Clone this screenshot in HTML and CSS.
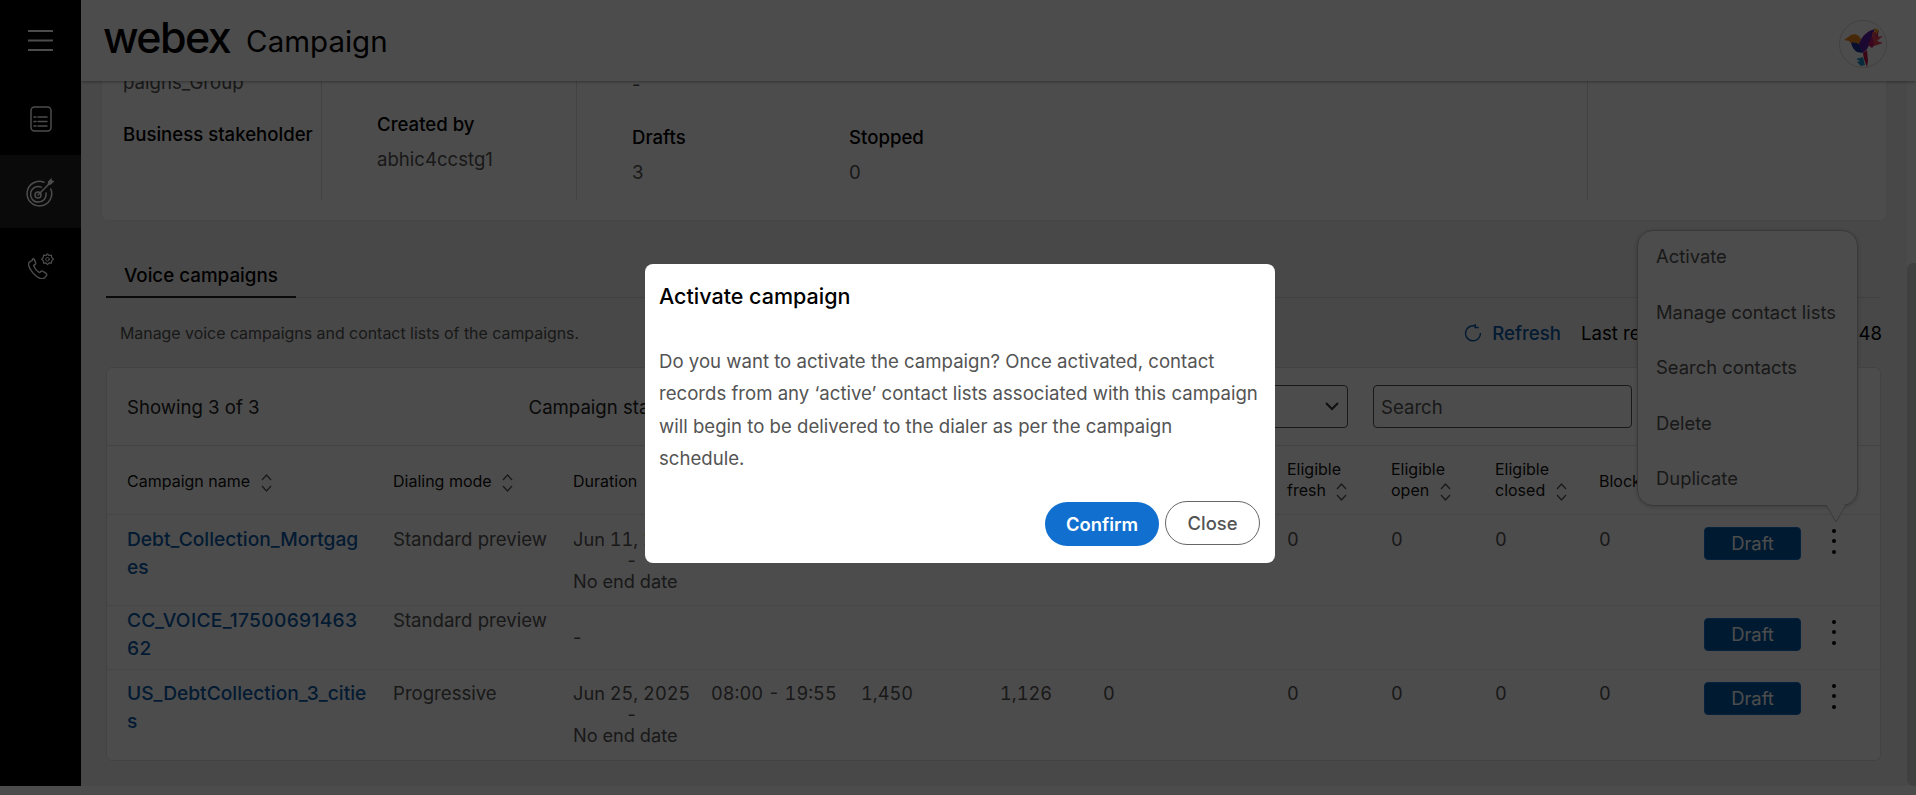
FILE: index.html
```html
<!DOCTYPE html>
<html lang="en">
<head>
<meta charset="utf-8">
<title>Webex Campaign</title>
<link rel="stylesheet" href="styles.css">
</head>
<body>
<div class="app">
  <nav class="sidebar">
    <div class="nav-item nav-menu">
      <svg width="25" height="22" viewBox="0 0 25 22"><path d="M0 2h25M0 11.500h25M0 21h25" class="ic" stroke-width="2"/></svg>
    </div>
    <div class="nav-item nav-list">
      <svg width="22" height="26" viewBox="0 0 22 26"><rect x="1" y="1" width="20" height="24" rx="3.500" class="ic" stroke-width="1.500"/><path d="M8 11h9M8 15.500h9M8 20h9M4 11h2M4 15.500h2M4 20h2" class="ic" stroke-width="1.500"/></svg>
    </div>
    <div class="nav-item nav-active">
      <svg width="32" height="32" viewBox="0 0 32 32"><path d="M20 5.200A12.300 12.300 0 1 0 26.800 12" class="ic" stroke-width="1.500"/><path d="M17.300 10.100A7.800 7.800 0 1 0 22 16" class="ic" stroke-width="1.500"/><circle cx="14" cy="18" r="3" class="ic" stroke-width="1.500"/><path d="M14 18 25 7" class="ic" stroke-width="1.500"/><path d="M23.500 8.500l.5-4L27.500 1l.5 2.500 2.500.5L27 7.500z" class="icf"/></svg>
    </div>
    <div class="nav-item nav-phone">
      <svg width="26" height="26" viewBox="0 0 26 26"><g transform="translate(-.5 -1) scale(1.100)"><path d="M4.500 7.500 2 9c-1 .7-1.200 1.800-1 3 .8 4 5.500 10 10.500 12 1.500.6 3 .5 4-.5l1.700-2c.5-.7.300-1.500-.3-2l-3-2c-.6-.4-1.300-.3-1.800.2l-1 1c-2.200-1.100-4.500-4-5.500-6.500l1.200-.8c.6-.4.800-1.100.5-1.800l-1-2.800c-.3-.6-1.100-.8-1.800-.3z" class="ic" stroke-width="1.300"/></g><path d="M19.500 .8l1.600 1.700 2.300-.3.300 2.300 1.700 1.700-1.700 1.700-.3 2.300-2.300-.3-1.600 1.700-1.600-1.700-2.300.3-.3-2.300-1.700-1.700 1.700-1.700.3-2.300 2.300.3z" class="ic" stroke-width="1.200"/><circle cx="19.500" cy="6.300" r="1.800" class="ic" stroke-width="1"/></svg>
    </div>
  </nav>
  <div class="main">
    <header class="topbar">
      <span class="logo">webex</span>
      <span class="product">Campaign</span>
      <span class="avatar">
        <svg width="48" height="48" viewBox="0 0 48 48">
          <circle cx="24" cy="24" r="23.500" fill="#fff" stroke="#d8d8d8"/>
          <path d="M5 20 12 15c4-2 8 0 10 4l-1 6c-5 1-9-1-11-4z" fill="#ef8a1f"/>
          <path d="M12 23c3-1 7 0 9 2l3 8-6-1c-3-2-5-5-6-9z" fill="#1d2f9a"/>
          <path d="M20 24c3-8 8-13 16-15-3 6-4 13-8 20l-4 4z" fill="#5a1fa8"/>
          <path d="M29 25c2-6 5-11 10-13 1 5-2 12-6 16z" fill="#c2186b"/>
          <path d="M33 12l7-1-3 6 7-1-6 5 6 2-9 3z" fill="#e8455a"/>
          <path d="M35 8l5 2-3 4z" fill="#f0a020"/>
          <path d="M24 33l4-3 1 11-1 6-3-8z" fill="#c0134f"/>
          <path d="M24 37l2 8-4 1-4-4 3-1-4-2z" fill="#1a8fc4"/>
        </svg>
      </span>
    </header>
    <div class="body-row">
      <div class="scroller">
        <section class="summary">
          <div class="sum-col sum-a">
            <div class="sum-value sum-clip">paigns_Group</div>
            <div class="sum-label sum-stake">Business stakeholder</div>
          </div>
          <div class="sum-col sum-b">
            <div class="sum-label">Created by</div>
            <div class="sum-value sum-gap">abhic4ccstg1</div>
          </div>
          <div class="sum-col sum-c">
            <div class="sum-value sum-dash">-</div>
            <div class="sum-stats">
              <div class="stat">
                <div class="sum-label">Drafts</div>
                <div class="sum-value sum-gap">3</div>
              </div>
              <div class="stat">
                <div class="sum-label">Stopped</div>
                <div class="sum-value sum-gap">0</div>
              </div>
            </div>
          </div>
          <div class="sum-col sum-d"></div>
        </section>
        <div class="tabs"><span class="tab">Voice campaigns</span></div>
        <div class="desc-row">
          <span class="desc">Manage voice campaigns and contact lists of the campaigns.</span>
          <span class="refresh">
            <svg width="18" height="18" viewBox="0 0 18 18"><path d="M11.500 2.200A7.500 7.500 0 1 0 16.500 9" class="rf"/><path d="M11.200 0v3.600h3.500" class="rf"/></svg>
            Refresh
          </span>
          <span class="last">Last refreshed at Jun 25, 16:24:48</span>
        </div>
        <section class="panel">
          <div class="panel-head">
            <span class="showing">Showing 3 of 3</span>
            <span class="status-label">Campaign status</span>
            <span class="select">
              <svg width="14" height="9" viewBox="0 0 14 9"><path d="M1 1l6 6 6-6" class="chev"/></svg>
            </span>
            <span class="search">Search</span>
          </div>
          <table class="grid">
            <colgroup>
              <col class="c-name"><col class="c-mode"><col class="c-dur"><col class="c-time"><col class="c-num1"><col class="c-num2"><col class="c-num3"><col class="c-num4"><col class="c-num5"><col class="c-num5"><col class="c-num6"><col class="c-stat"><col class="c-act">
            </colgroup>
            <thead>
              <tr>
                <th class="single"><span class="th-in">Campaign name <svg class="sort" width="11" height="18" viewBox="0 0 11 18"><path d="M1 6l4.500-5L10 6M1 12l4.500 5L10 12"/></svg></span></th>
                <th class="single"><span class="th-in">Dialing mode <svg class="sort" width="11" height="18" viewBox="0 0 11 18"><path d="M1 6l4.500-5L10 6M1 12l4.500 5L10 12"/></svg></span></th>
                <th class="single">Duration</th>
                <th>Time</th>
                <th>Total</th>
                <th>Dialed</th>
                <th>Failed</th>
                <th>Eligible<br>fresh <svg class="sort" width="11" height="18" viewBox="0 0 11 18"><path d="M1 6l4.500-5L10 6M1 12l4.500 5L10 12"/></svg></th>
                <th>Eligible<br>open <svg class="sort" width="11" height="18" viewBox="0 0 11 18"><path d="M1 6l4.500-5L10 6M1 12l4.500 5L10 12"/></svg></th>
                <th>Eligible<br>closed <svg class="sort" width="11" height="18" viewBox="0 0 11 18"><path d="M1 6l4.500-5L10 6M1 12l4.500 5L10 12"/></svg></th>
                <th class="single">Blocked</th>
                <th></th>
                <th></th>
              </tr>
            </thead>
            <tbody>
              <tr class="row-a">
                <td><a class="link">Debt_Collection_Mortgages</a></td>
                <td>Standard preview</td>
                <td class="num"><div class="dur">Jun 11, 2025<span class="dur-dash">-</span>No end date</div></td>
                <td class="num">08:00 - 19:55</td>
                <td class="num">1,450</td>
                <td class="num">1,126</td>
                <td class="num">0</td>
                <td class="num">0</td>
                <td class="num">0</td>
                <td class="num">0</td>
                <td class="num">0</td>
                <td class="act"><span class="draft">Draft</span></td>
                <td class="act"><span class="kebab"><i></i><i></i><i></i></span></td>
              </tr>
              <tr class="row-b">
                <td><a class="link link-digits">CC_VOICE_17500691463<br>62</a></td>
                <td>Standard preview</td>
                <td><div class="dash">-</div></td>
                <td></td>
                <td></td>
                <td></td>
                <td></td>
                <td></td>
                <td></td>
                <td></td>
                <td></td>
                <td class="act"><span class="draft">Draft</span></td>
                <td class="act"><span class="kebab"><i></i><i></i><i></i></span></td>
              </tr>
              <tr class="row-c">
                <td><a class="link">US_DebtCollection_3_cities</a></td>
                <td>Progressive</td>
                <td class="num"><div class="dur">Jun 25, 2025<span class="dur-dash">-</span>No end date</div></td>
                <td class="num">08:00 - 19:55</td>
                <td class="num">1,450</td>
                <td class="num">1,126</td>
                <td class="num">0</td>
                <td class="num">0</td>
                <td class="num">0</td>
                <td class="num">0</td>
                <td class="num">0</td>
                <td class="act"><span class="draft">Draft</span></td>
                <td class="act"><span class="kebab"><i></i><i></i><i></i></span></td>
              </tr>
            </tbody>
          </table>
        </section>
      </div>
      <div class="vscroll"><div class="vthumb"></div></div>
    </div>
  </div>
</div>
<div class="hscroll"></div>

<div class="menu">
  <div class="menu-item">Activate</div>
  <div class="menu-item">Manage contact lists</div>
  <div class="menu-item">Search contacts</div>
  <div class="menu-item">Delete</div>
  <div class="menu-item">Duplicate</div>
  <svg class="menu-tip" width="22" height="18" viewBox="0 0 22 18"><path d="M1 0 11 17 21 0" class="tip-shape"/></svg>
</div>

<div class="overlay"></div>

<div class="dialog">
  <h2 class="dlg-title">Activate campaign</h2>
  <p class="dlg-text">Do you want to activate the campaign? Once activated, contact records from any ‘active’ contact lists associated with this campaign will begin to be delivered to the dialer as per the campaign schedule.</p>
  <div class="dlg-actions">
    <button class="btn btn-primary">Confirm</button>
    <button class="btn btn-ghost">Close</button>
  </div>
</div>
</body>
</html>
```
FILE: styles.css
```css
* { box-sizing: border-box; }
html, body { margin: 0; height: 795px; overflow: hidden; }
body { font-family: Inter, "Liberation Sans", sans-serif; font-size: 18.6px; color: #545454; background: #fff; position: relative; }

.app { display: flex; height: 786px; }
.hscroll { height: 9px; background: #fff; }

/* sidebar */
.sidebar { width: 81px; flex: none; background: #000; display: flex; flex-direction: column; align-items: stretch; }
.nav-item { display: flex; justify-content: center; align-items: center; }
.nav-menu { height: 80px; }
.nav-list { height: 75px; padding-top: 2px; }
.nav-active { height: 73px; background: #232323; padding-right: 2px; padding-top: 3px; }
.nav-phone { height: 70px; padding-top: 6px; }
.ic { fill: none; stroke: #fff; stroke-linecap: round; stroke-linejoin: round; }
.icf { fill: #fff; }

/* main */
.main { flex: 1; display: flex; flex-direction: column; min-width: 0; background: #f1f1f1; }
.topbar { height: 81px; flex: none; background: #fff; display: flex; align-items: center; padding-left: 22px; padding-right: 29px; box-shadow: 0 1px 3px rgba(0,0,0,.35); position: relative; z-index: 2; }
.logo { font-size: 43px; font-weight: 500; letter-spacing: -1.600px; color: #000; line-height: 1; margin-top: -7px; }
.product { font-size: 29.500px; color: #000; margin-left: 16px; line-height: 1; margin-top: 3px; }
.avatar { margin-left: auto; display: block; height: 48px; margin-top: 7px; }

.body-row { flex: 1; display: flex; min-height: 0; }
.scroller { flex: 1; min-width: 0; overflow: hidden; padding: 0 21px; }
.vscroll { width: 9px; flex: none; background: #fbfbfb; display: flex; flex-direction: column; justify-content: flex-end; }
.vthumb { height: 523px; background: #d8d8d8; border-radius: 6px 0 0 6px; }

/* summary card */
.summary { display: flex; height: 190px; margin-top: -51px; background: #fff; border-radius: 6px; box-shadow: 0 0 2px rgba(0,0,0,.08); padding-top: 20px; }
.sum-col { height: 150px; border-right: 1px solid #dcdcdc; }
.sum-a { width: 220px; padding-left: 21px; }
.sum-b { width: 255px; padding-left: 55px; padding-top: 64px; }
.sum-c { width: 1011px; padding-left: 55px; }
.sum-d { flex: 1; border-right: 0; }
.sum-label { color: #000; font-weight: 500; font-size: 18.600px; line-height: 20px; white-space: nowrap; }
.sum-value { font-size: 18.600px; line-height: 20px; white-space: nowrap; }
.sum-clip { margin-top: 22px; }
.sum-stake { margin-top: 32px; }
.sum-gap { margin-top: 15px; }
.sum-dash { margin-top: 24px; }
.sum-stats { display: flex; margin-top: 33px; }
.stat { width: 217px; }

/* tabs */
.tabs { margin-top: 36px; margin-left: 4px; margin-right: 6px; height: 42px; border-bottom: 1px solid #d8d8d8; }
.tab { display: block; width: 190px; height: 42px; padding: 10px 0 0 18px; font-size: 18.800px; font-weight: 500; line-height: 20px; color: #000; border-bottom: 2px solid #222; }

/* description row */
.desc-row { display: flex; align-items: center; height: 34px; margin-top: 18px; margin-left: 18px; margin-right: 4px; }
.desc { font-size: 15.900px; color: #545454; white-space: nowrap; }
.refresh { margin-left: auto; display: flex; align-items: center; gap: 10px; color: #0a5aa8; font-weight: 500; font-size: 18.600px; }
.rf { fill: none; stroke: #0a5aa8; stroke-width: 1.500; }
.last { margin-left: 17px; width: 304px; color: #000; font-size: 18.600px; white-space: nowrap; text-align: right; overflow: hidden; }

/* table panel */
.panel { margin-top: 17px; margin-left: 4px; margin-right: 5px; height: 394px; background: #fff; border: 1px solid #dedede; border-radius: 6px; }
.panel-head { height: 78px; border-bottom: 1px solid #e2e2e2; display: flex; align-items: center; padding-left: 20px; position: relative; }
.showing { color: #222; font-size: 18.600px; }
.status-label { color: #222; margin-left: 269px; font-size: 18.600px; }
.select { position: absolute; left: 1000px; top: 17px; width: 241px; height: 43px; border: 1px solid #555; border-radius: 4px; display: flex; justify-content: flex-end; align-items: center; padding-right: 8px; }
.chev { fill: none; stroke: #333; stroke-width: 2; }
.search { position: absolute; left: 1266px; top: 17px; width: 259px; height: 43px; border: 1px solid #555; border-radius: 4px; display: flex; align-items: center; padding-left: 7px; color: #545454; font-size: 18.600px; }

.grid { width: 1774px; table-layout: fixed; border-collapse: collapse; }
.c-name { width: 266px; } .c-mode { width: 180px; } .c-dur { width: 138px; } .c-time { width: 150px; }
.c-num1 { width: 139px; } .c-num2 { width: 103px; } .c-num3 { width: 184px; } .c-num4 { width: 104px; }
.c-num5 { width: 104px; } .c-num6 { width: 105px; } .c-stat { width: 130px; } .c-act { width: 67px; }
.grid th { height: 68px; padding: 0 0 0 20px; text-align: left; font-weight: 400; font-size: 16px; line-height: 21px; color: #111; border-bottom: 1px solid #ececec; white-space: nowrap; overflow: hidden; }
.grid th.single { padding-top: 4px; }
.th-in { white-space: nowrap; }
.sort { vertical-align: -5px; margin-left: 6px; }
.sort path { fill: none; stroke: #555; stroke-width: 1.300; }
.grid td { vertical-align: top; padding: 10px 0 0 20px; line-height: 28px; font-size: 18.600px; border-bottom: 1px solid #ececec; white-space: nowrap; }
.grid td.num { font-size: 18.200px; font-variant-numeric: tabular-nums; }
.grid tr:last-child td { border-bottom: 0; }
.row-a td { height: 91px; padding-top: 10px; }
.row-b td { height: 64px; padding-top: 0; }
.row-c td { height: 92px; padding-top: 9px; }
.link { color: #0a5aa8; font-weight: 500; font-size: 19.200px; word-break: break-all; white-space: normal; display: block; padding-right: 4px; }
.link-digits { letter-spacing: .3px; }
.dur { line-height: 21px; display: inline-block; text-align: left; margin-top: 4px; white-space: nowrap; }
.dur-dash { display: block; text-align: center; }
.dash { margin-top: 17px; }
.grid td.act { padding-top: 12px; }
.draft { display: flex; width: 97px; height: 33px; background: #0059a3; border: 1px solid #1170cf; border-radius: 4px; justify-content: center; align-items: center; color: #fff; font-size: 18.400px; font-weight: 400; }
.kebab { display: flex; flex-direction: column; gap: 6.500px; padding-top: 2px; margin-left: -2px; }
.kebab i { width: 4px; height: 4px; border-radius: 50%; background: #000; display: block; }

/* popover menu */
.menu { position: absolute; left: 1637px; top: 230px; width: 221px; height: 276px; background: #fff; border: 1px solid #c0c0c0; border-radius: 16px; box-shadow: 0 1px 4px rgba(0,0,0,.2); }
.menu-item { height: 55.500px; padding-left: 18px; line-height: 51.500px; font-size: 18.400px; color: #545454; white-space: nowrap; }
.menu-tip { position: absolute; left: 187px; top: 274px; display: block; }
.tip-shape { fill: #fff; stroke: #c0c0c0; stroke-width: 1; }

/* modal */
.overlay { position: absolute; inset: 0; background: rgba(0,0,0,.7); z-index: 10; }
.dialog { position: absolute; left: 645px; top: 264px; width: 630px; height: 299px; background: #fff; border-radius: 8px; padding: 20px 14px 0; z-index: 11; }
.dlg-title { margin: 0; font-size: 21.500px; font-weight: 500; line-height: 24px; color: #000; }
.dlg-text { margin: 37px 0 0; font-size: 18.600px; line-height: 32.400px; color: #545454; }
.dlg-actions { display: flex; justify-content: flex-end; align-items: center; gap: 6px; margin-top: 27px; margin-right: 1px; }
.btn { font-family: inherit; font-size: 18.400px; border-radius: 22px; height: 44px; cursor: pointer; }
.btn-primary { width: 114px; background: #1170cf; color: #fff; font-weight: 600; border: 0; }
.btn-ghost { width: 95px; background: #fff; color: #545454; font-weight: 500; border: 1px solid #666; margin-top: -2px; }
```
